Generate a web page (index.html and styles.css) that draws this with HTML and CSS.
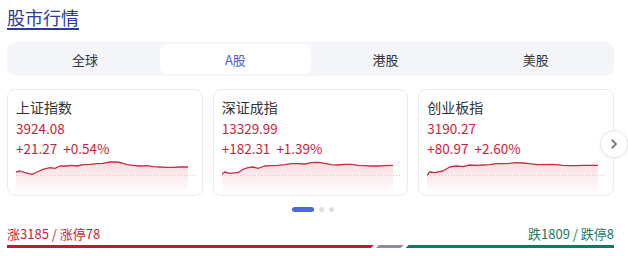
FILE: index.html
```html
<!DOCTYPE html>
<html lang="zh-CN">
<head>
<meta charset="utf-8">
<title>股市行情</title>
<link rel="stylesheet" href="styles.css">
</head>
<body>
<div class="page">
  <h1 class="title">股市行情</h1>
  <div class="tabs">
    <div class="tab">全球</div>
    <div class="tab active">A股</div>
    <div class="tab">港股</div>
    <div class="tab">美股</div>
  </div>
  <div class="cards-wrap">
    <div class="cards">
      <div class="card">
        <div class="card-name">上证指数</div>
        <div class="card-value">3924.08</div>
        <div class="card-change"><span>+21.27</span><span>+0.54%</span></div>
        <svg class="chart" width="178" height="36" viewBox="0 0 178 36">
          <defs>
            <linearGradient id="g1" x1="0" y1="0" x2="0" y2="1">
              <stop offset="0" stop-color="#d22a45" stop-opacity="0.16"/>
              <stop offset="1" stop-color="#d22a45" stop-opacity="0"/>
            </linearGradient>
          </defs>
          <polygon fill="url(#g1)" points="0,13 4,12 9,13.7 16,15.3 21,13 27,10.3 34,8.7 39,9.3 44,7 51,7 56,6.3 61,7 67,5.7 74,5.3 81,4.7 87,4.3 94,3 101,3 106,4 111,5.7 117,6.3 124,7 131,6.7 137,7.7 144,8 151,8.3 157,8.3 164,8 172,8 172,36 0,36"/>
          <line x1="0" y1="16.5" x2="178" y2="16.5" class="base"/>
          <polyline class="line" points="0,13 4,12 9,13.7 16,15.3 21,13 27,10.3 34,8.7 39,9.3 44,7 51,7 56,6.3 61,7 67,5.7 74,5.3 81,4.7 87,4.3 94,3 101,3 106,4 111,5.7 117,6.3 124,7 131,6.7 137,7.7 144,8 151,8.3 157,8.3 164,8 172,8"/>
        </svg>
      </div>
      <div class="card">
        <div class="card-name">深证成指</div>
        <div class="card-value">13329.99</div>
        <div class="card-change"><span>+182.31</span><span>+1.39%</span></div>
        <svg class="chart" width="178" height="36" viewBox="0 0 178 36">
          <polygon fill="url(#g1)" points="0,15.3 2.7,13 7.7,14.3 16,13.7 21,10.3 26,8.7 31,8 36,9.3 42.7,7 49.3,6.7 56,6.3 62.7,5.7 69.3,4.7 76,4.7 82.7,5 89.3,3.7 96,3.3 102.7,4.3 109.3,5.7 116,6 122.7,5.3 129.3,5.3 136,6.3 142.7,6.7 149.3,7 156,7 162.7,6.7 171,6.3 171,36 0,36"/>
          <line x1="0" y1="16.5" x2="178" y2="16.5" class="base"/>
          <polyline class="line" points="0,15.3 2.7,13 7.7,14.3 16,13.7 21,10.3 26,8.7 31,8 36,9.3 42.7,7 49.3,6.7 56,6.3 62.7,5.7 69.3,4.7 76,4.7 82.7,5 89.3,3.7 96,3.3 102.7,4.3 109.3,5.7 116,6 122.7,5.3 129.3,5.3 136,6.3 142.7,6.7 149.3,7 156,7 162.7,6.7 171,6.3"/>
        </svg>
      </div>
      <div class="card">
        <div class="card-name">创业板指</div>
        <div class="card-value">3190.27</div>
        <div class="card-change"><span>+80.97</span><span>+2.60%</span></div>
        <svg class="chart" width="178" height="36" viewBox="0 0 178 36">
          <polygon fill="url(#g1)" points="0,16.3 2.7,13 7.7,13.7 16,12 22.7,8 29.3,7 36,7.7 42.7,6 49.3,6.3 56,6 62.7,5.7 69.3,4.7 76,4.7 82.7,4.3 89.3,3.7 96,4 102.7,4.7 109.3,5.7 116,5.7 122.7,5.3 129.3,5.7 136,6.3 142.7,6.7 149.3,6.7 156,6.3 162.7,6.3 171,6.3 171,36 0,36"/>
          <line x1="0" y1="16.5" x2="178" y2="16.5" class="base"/>
          <polyline class="line" points="0,16.3 2.7,13 7.7,13.7 16,12 22.7,8 29.3,7 36,7.7 42.7,6 49.3,6.3 56,6 62.7,5.7 69.3,4.7 76,4.7 82.7,4.3 89.3,3.7 96,4 102.7,4.7 109.3,5.7 116,5.7 122.7,5.3 129.3,5.7 136,6.3 142.7,6.7 149.3,6.7 156,6.3 162.7,6.3 171,6.3"/>
        </svg>
      </div>
    </div>
    <button class="next" aria-label="下一页">
      <svg width="12" height="12" viewBox="0 0 12 12"><path d="M4.2 2.2 L8 6 L4.2 9.8" fill="none" stroke="#7d7f85" stroke-width="2" stroke-linecap="round" stroke-linejoin="round"/></svg>
    </button>
  </div>
  <div class="dots">
    <span class="dot current"></span>
    <span class="dot"></span>
    <span class="dot"></span>
  </div>
  <div class="breadth">
    <span class="up">涨3185 / 涨停78</span>
    <span class="down">跌1809 / 跌停8</span>
  </div>
  <div class="bar">
    <span class="seg seg-up" style="flex-grow:3185"></span>
    <span class="seg seg-flat" style="flex-grow:240"></span>
    <span class="seg seg-down" style="flex-grow:1809"></span>
  </div>
</div>
</body>
</html>
```

FILE: styles.css
```css
* { box-sizing: border-box; }
html, body { margin: 0; padding: 0; background: #fff; }
body {
  font-family: "Noto Sans CJK SC", "Liberation Sans", sans-serif;
  color: #333;
}
.page { padding: 4px 14px 0 7px; width: 628px; }
.title {
  margin: 0;
  font-size: 18px;
  line-height: 26px;
  font-weight: 400;
  color: #2b3a9c;
  text-decoration: underline;
  text-decoration-thickness: 1.5px;
  text-underline-offset: 3px;
  display: inline-block;
}
.tabs {
  margin-top: 12px;
  height: 34px;
  background: #f3f5f9;
  border-radius: 9px;
  padding: 2px 3px;
  display: grid;
  grid-template-columns: repeat(4, 1fr);
}
.tab {
  display: flex;
  align-items: center;
  justify-content: center;
  font-size: 13px;
  line-height: 19px;
  color: #333;
  border-radius: 7px;
}
.tab.active { background: #fff; color: #4b5fd6; }
.cards-wrap { position: relative; margin-top: 13px; }
.cards {
  display: grid;
  grid-template-columns: repeat(3, 1fr);
  gap: 10px;
}
.card {
  border: 1px solid #ebebeb;
  border-radius: 8px;
  padding: 7px 8px 0 8px;
  height: 107px;
  overflow: hidden;
}
.card-name { font-size: 14px; line-height: 21px; color: #333; }
.card-value {
  font-size: 13.5px;
  line-height: 20px;
  color: #c81e3a;
}
.card-change {
  font-size: 13.5px;
  line-height: 20px;
  color: #c81e3a;
  display: flex;
  gap: 6px;
}
.chart { display: block; margin-top: 1px; }
.chart .line { fill: none; stroke: #c42d45; stroke-width: 1.3; stroke-linejoin: round; }
.chart .base { stroke: #d8c8cb; stroke-width: 1; stroke-dasharray: 1 2; }
.next {
  position: absolute;
  right: -14px;
  top: 41px;
  width: 28px;
  height: 28px;
  border-radius: 50%;
  border: 1px solid #e6e6e8;
  background: #fff;
  box-shadow: 0 1px 3px rgba(0,0,0,0.06);
  padding: 0;
  display: flex;
  align-items: center;
  justify-content: center;
}
.dots {
  margin-top: 11px;
  height: 5px;
  display: flex;
  justify-content: center;
  gap: 5px;
  padding-left: 4px;
}
.dot { width: 5px; height: 5px; border-radius: 3px; background: #dcdde0; }
.dot.current { width: 22px; background: #4a66e0; }
.breadth {
  margin-top: 12px;
  display: flex;
  justify-content: space-between;
  font-size: 13px;
  line-height: 19px;
}
.up { color: #c81e3a; }
.down { color: #17795d; }
.bar {
  margin-top: 2px;
  height: 3px;
  display: flex;
  gap: 2px;
}
.seg { flex-basis: 0; height: 3px; }
.seg-up { background: #d0142f; clip-path: polygon(0 0, 100% 0, calc(100% - 3px) 100%, 0 100%); }
.seg-flat { background: #8d8e96; clip-path: polygon(3px 0, 100% 0, calc(100% - 3px) 100%, 0 100%); }
.seg-down { background: #0f7a5f; clip-path: polygon(3px 0, 100% 0, 100% 100%, 0 100%); }
```
